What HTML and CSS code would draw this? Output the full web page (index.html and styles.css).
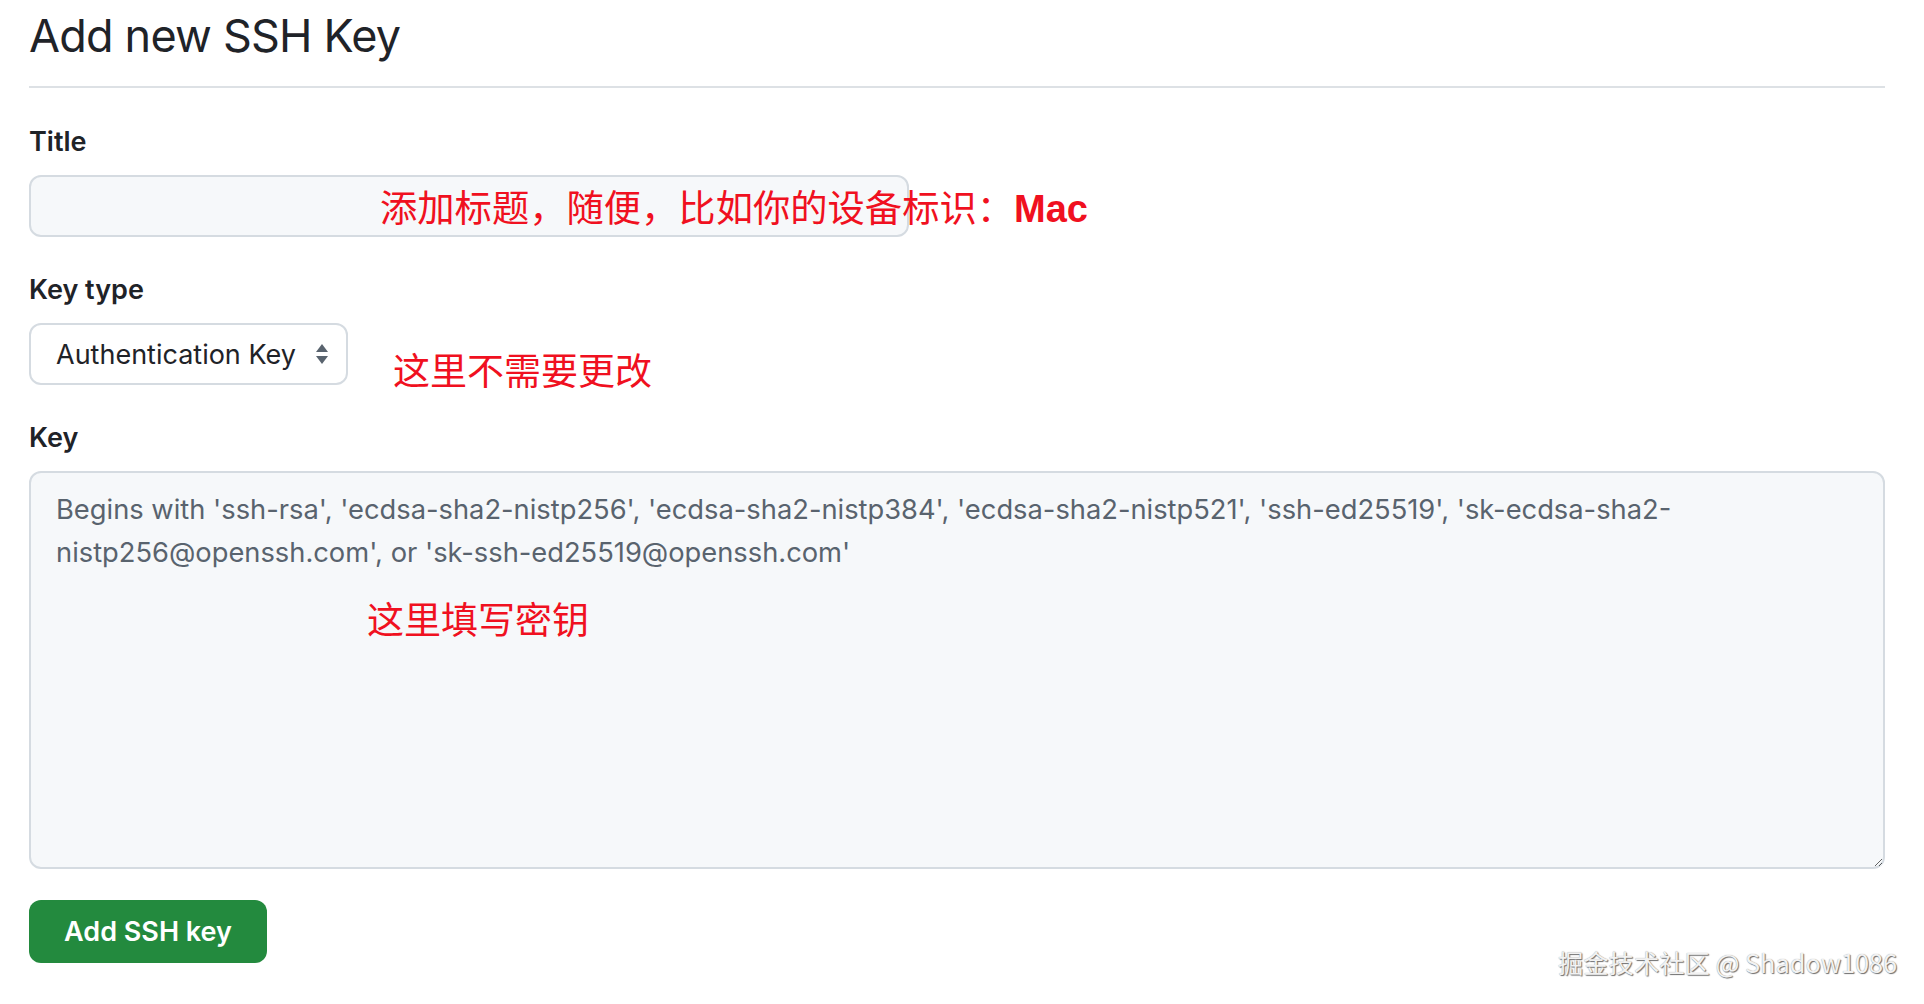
FILE: index.html
```html
<!DOCTYPE html>
<html lang="zh-CN">
<head>
<meta charset="utf-8">
<title>Add new SSH Key</title>
<link rel="stylesheet" href="styles.css">
</head>
<body>
<div class="page">
  <h2 class="heading">Add new SSH Key</h2>
  <form class="form">
    <div class="field">
      <label class="label" for="title">Title</label>
      <div class="control">
        <input class="input" id="title" type="text">
        <span class="note note-title">添加标题，随便，比如你的设备标识：<b class="note-strong">Mac</b></span>
      </div>
    </div>
    <div class="field">
      <label class="label" for="type">Key type</label>
      <div class="control">
        <div class="select">
          <span class="select-text">Authentication Key</span>
          <svg class="select-arrows" width="14" height="20" viewBox="0 0 14 20"><path d="M7 0 L13 8 H1 Z" fill="#59636e"/><path d="M1 12 H13 L7 20 Z" fill="#59636e"/></svg>
        </div>
        <span class="note note-type">这里不需要更改</span>
      </div>
    </div>
    <div class="field">
      <label class="label" for="key">Key</label>
      <div class="control">
        <textarea class="textarea" id="key" placeholder="Begins with 'ssh-rsa', 'ecdsa-sha2-nistp256', 'ecdsa-sha2-nistp384', 'ecdsa-sha2-nistp521', 'ssh-ed25519', 'sk-ecdsa-sha2-&#10;nistp256@openssh.com', or 'sk-ssh-ed25519@openssh.com'"></textarea>
        <span class="note note-key">这里填写密钥</span>
      </div>
    </div>
    <button class="button" type="button">Add SSH key</button>
  </form>
</div>
<div class="watermark">掘金技术社区 @ Shadow1086</div>
</body>
</html>
```

FILE: styles.css
```css
* { box-sizing: border-box; }
html, body { margin: 0; padding: 0; background: #ffffff; }
body {
  font-family: Inter, "Liberation Sans", "Noto Sans CJK SC", sans-serif;
  color: #1f2328;
  width: 1924px;
  height: 1004px;
  overflow: hidden;
  position: relative;
}
.page {
  padding: 9px 39px 0 29px;
}
.heading {
  margin: 0;
  font-size: 45px;
  line-height: 54px;
  font-weight: 400;
  letter-spacing: -0.8px;
  padding-bottom: 23px;
  border-bottom: 2px solid #dde1e5;
}
.form {
  display: flex;
  flex-direction: column;
}
.field {
  display: flex;
  flex-direction: column;
  gap: 17px;
  margin-top: 37px;
}
.field:first-child {
  margin-top: 38px;
}
.label {
  font-size: 27px;
  line-height: 32px;
  font-weight: 600;
  color: #1f2328;
}
.control {
  position: relative;
}
.input {
  display: block;
  width: 880px;
  height: 62px;
  border: 2px solid #d5dbe1;
  border-radius: 12px;
  background: #f6f8fa;
  font: inherit;
  outline: none;
}
.select {
  width: 319px;
  height: 62px;
  border: 2px solid #d5dbe1;
  border-radius: 12px;
  background: #ffffff;
  display: flex;
  align-items: center;
  justify-content: space-between;
  padding: 0 17px 0 25px;
}
.select-text {
  font-size: 27px;
  color: #1f2328;
}
.select-arrows { display: block; }
.textarea {
  display: block;
  width: 100%;
  height: 398px;
  border: 2px solid #d5dbe1;
  border-radius: 12px;
  background: #f6f8fa;
  padding: 15px 25px;
  font-family: Inter, "Liberation Sans", sans-serif;
  font-size: 27.3px;
  line-height: 43px;
  color: #1f2328;
  outline: none;
  resize: vertical;
}
.textarea::placeholder {
  color: #59636e;
  opacity: 1;
}
.note {
  position: absolute;
  color: #f01020;
  font-family: "Noto Sans CJK SC", sans-serif;
  font-size: 37px;
  line-height: 44px;
  white-space: nowrap;
}
.note-title { font-size: 37.3px; }
.note-strong {
  font-family: "Liberation Sans", Arial, sans-serif;
  font-weight: 700;
  font-size: 38px;
}
.note-title { left: 351px; top: 9px; }
.note-type { left: 364px; top: 24px; }
.note-key { left: 338px; top: 125px; }
.button {
  margin-top: 31px;
  width: 238px;
  height: 63px;
  border: none;
  border-radius: 12px;
  background: #238a3e;
  color: #ffffff;
  font-family: Inter, "Liberation Sans", sans-serif;
  font-size: 27px;
  font-weight: 600;
  padding: 0;
}
.watermark {
  position: absolute;
  left: 1558px;
  top: 946px;
  font-family: "Noto Sans CJK SC", sans-serif;
  font-size: 25.3px;
  line-height: 32px;
  color: #f2f2f2;
  text-shadow: 1px 1px 1px #6e6e6e, 0 0 1px #9a9a9a;
  white-space: nowrap;
}
```
